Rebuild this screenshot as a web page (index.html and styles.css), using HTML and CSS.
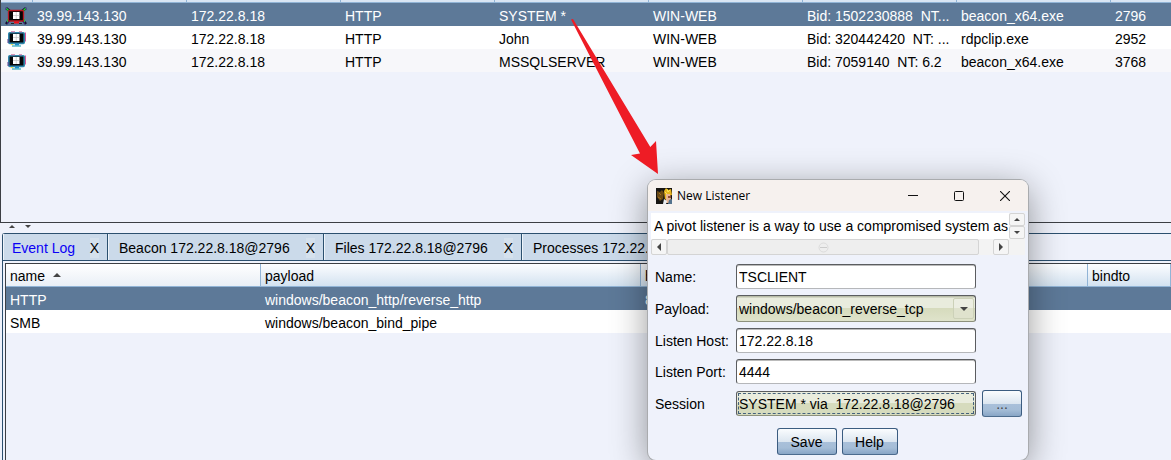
FILE: index.html
```html
<!DOCTYPE html>
<html lang="en">
<head>
<meta charset="utf-8">
<title>New Listener</title>
<link rel="stylesheet" href="styles.css">
</head>
<body>
<svg width="0" height="0" class="defs" aria-hidden="true">
  <symbol id="screen" viewBox="0 0 20 16">
    <rect x="1.800" y="1.800" width="15.400" height="10.600" rx="1" fill="#050608" stroke="#2f86ac" stroke-width="1.600"/>
    <path d="M18.500 1.500v9" stroke="#d8569a" stroke-width="1"/>
    <path d="M1 8v4" stroke="#5b3b8c" stroke-width="1"/>
    <path d="M4 .8h4M12 .8h3" stroke="#c76a9c"/>
    <path d="M6 3h6.500v7H6z" fill="#fff"/>
    <path d="M9.250 3v7M6 6.500h6.500" stroke="#b9b9b9" stroke-width=".6"/>
    <path d="M8 12.800h4v1.700H8z" fill="#1c8fd0"/>
    <path d="M5 15h9" stroke="#2aa6b8" stroke-width="1.200"/>
    <path d="M4 13.500h2" stroke="#e7e34b"/>
  </symbol>
  <symbol id="screen-admin" viewBox="0 0 22 18">
    <path d="M1 1l5 4M21 1l-5 4M1 17l4-5M21 17l-4-5" stroke="#17102f" stroke-width="2.600"/>
    <path d="M1 1l4 4M21 1l-4 4" stroke="#19d62b" stroke-width="1.500"/>
    <path d="M0 3V1h2M22 3V1h-2M3 13v4M19 13v4" stroke="#52429a" fill="none"/>
    <path d="M2.500 12v3M19.500 12v3" stroke="#27c53c"/>
    <rect x="3.500" y="3.500" width="15" height="10.500" rx="1" fill="#050505" stroke="#b51722" stroke-width="1.300"/>
    <path d="M8 5h6.500v7H8z" fill="#fff"/>
    <path d="M11.250 5v7M8 8.500h6.500" stroke="#b9b9b9" stroke-width=".6"/>
    <path d="M9 14.500h5v2H9z" fill="#f01018"/>
    <path d="M6 16.500h3M14 16.500h3" stroke="#222"/>
  </symbol>
</svg>

<main class="app">
  <section class="sessions">
    <div class="head-strip"><i></i><i></i><i></i><i></i><i></i><i></i><i></i><i></i></div>
    <table class="grid sessions-grid">
      <colgroup><col class="c-icon"><col class="c-data"><col class="c-data"><col class="c-data"><col class="c-data"><col class="c-data"><col class="c-data"><col class="c-data"><col></colgroup>
      <tbody>
        <tr class="selected"><td class="icon"><svg width="22" height="18"><use href="#screen-admin"/></svg></td><td>39.99.143.130</td><td>172.22.8.18</td><td>HTTP</td><td>SYSTEM *</td><td>WIN-WEB</td><td>Bid: 1502230888  NT...</td><td>beacon_x64.exe</td><td>2796</td></tr>
        <tr><td class="icon"><svg width="20" height="16"><use href="#screen"/></svg></td><td>39.99.143.130</td><td>172.22.8.18</td><td>HTTP</td><td>John</td><td>WIN-WEB</td><td>Bid: 320442420  NT: ...</td><td>rdpclip.exe</td><td>2952</td></tr>
        <tr class="alt"><td class="icon"><svg width="20" height="16"><use href="#screen"/></svg></td><td>39.99.143.130</td><td>172.22.8.18</td><td>HTTP</td><td>MSSQLSERVER</td><td>WIN-WEB</td><td>Bid: 7059140  NT: 6.2</td><td>beacon_x64.exe</td><td>3768</td></tr>
      </tbody>
    </table>
  </section>

  <div class="divider">
    <svg width="6" height="3"><path d="M0 3L3 0l3 3z" fill="#444"/></svg>
    <svg width="6" height="3"><path d="M0 0l3 3 3-3z" fill="#444"/></svg>
  </div>

  <section class="panel">
    <nav class="tabs">
      <div class="tab t1"><a href="#log" class="active">Event Log</a><button>X</button></div>
      <div class="tab t2"><a href="#beacon">Beacon 172.22.8.18@2796</a><button>X</button></div>
      <div class="tab t3"><a href="#files">Files 172.22.8.18@2796</a><button>X</button></div>
      <div class="tab t4"><a href="#processes">Processes 172.22.8.18@2796</a><button>X</button></div>
    </nav>
    <div class="tab-body">
      <table class="grid listeners">
        <colgroup><col class="c-name"><col class="c-payload"><col class="c-host"><col></colgroup>
        <thead><tr><th>name<svg class="sort" width="8" height="4"><path d="M0 4l4-4 4 4z" fill="#444"/></svg></th><th>payload</th><th>host</th><th>bindto</th></tr></thead>
        <tbody>
          <tr class="selected"><td>HTTP</td><td>windows/beacon_http/reverse_http</td><td>8</td><td></td></tr>
          <tr><td>SMB</td><td>windows/beacon_bind_pipe</td><td></td><td></td></tr>
        </tbody>
      </table>
    </div>
  </section>
</main>

<form class="dialog">
  <header class="titlebar">
    <svg class="logo" width="16" height="16" viewBox="0 0 16 16">
      <rect width="16" height="16" fill="#171512"/>
      <path d="M1 3l3 1 2-2 2 3-1 6-3 2-3-4z" fill="#6b4a14"/>
      <path d="M3 5l2 2M2 9l3 2" stroke="#a8741c"/>
      <path d="M8 3l2-3 2 2 3-1 1 6-4 1-3 4z" fill="#e9b41e"/>
      <path d="M11 1l1 3 2-2M9 4l2 2" stroke="#fbea51" fill="none"/>
      <path d="M10 6h4l1 5-2 4h-3z" fill="#e9b591"/>
      <path d="M12 8h3v2h-3z" fill="#8c4b35"/>
      <path d="M8 11l3 2-1 3H7z" fill="#e8edf1"/>
      <path d="M13 12l3-1v5h-4z" fill="#54738e"/>
    </svg>
    <h1>New Listener</h1>
    <button type="button" aria-label="Minimize"><svg width="10" height="10"><path d="M0 4.500h10" stroke="#111"/></svg></button>
    <button type="button" aria-label="Maximize"><svg width="10" height="10"><rect x=".5" y=".5" width="9" height="9" rx="1" fill="none" stroke="#111"/></svg></button>
    <button type="button" aria-label="Close"><svg width="10" height="10"><path d="M0 0l10 10M10 0L0 10" stroke="#111" stroke-width="1.100"/></svg></button>
  </header>

  <div class="scroller">
    <p>A pivot listener is a way to use a compromised system as</p>
    <div class="vbar">
      <button type="button" aria-label="Up"><svg width="6" height="3"><path d="M0 3l3-3 3 3z" fill="#444"/></svg></button>
      <button type="button" aria-label="Down"><svg width="6" height="3"><path d="M0 0l3 3 3-3z" fill="#444"/></svg></button>
    </div>
    <div class="hbar">
      <button type="button" aria-label="Left"><svg width="4" height="8"><path d="M4 0L0 4l4 4z" fill="#444"/></svg></button>
      <div class="thumb"><svg width="11" height="11"><circle cx="5.500" cy="5.500" r="4.500" fill="none" stroke="#dcdcdc"/><path d="M2 5.500h7" stroke="#ccc"/></svg></div>
      <button type="button" aria-label="Right"><svg width="4" height="8"><path d="M0 0l4 4-4 4z" fill="#444"/></svg></button>
    </div>
  </div>

  <div class="fields">
    <label for="name">Name:</label><input id="name" value="TSCLIENT">
    <label for="payload">Payload:</label>
    <div class="combo"><select id="payload"><option>windows/beacon_reverse_tcp</option></select><span class="drop"><svg width="8" height="4"><path d="M0 0l4 4 4-4z" fill="#444"/></svg></span></div>
    <label for="host">Listen Host:</label><input id="host" value="172.22.8.18">
    <label for="port">Listen Port:</label><input id="port" value="4444">
    <label for="session">Session</label><button type="button" id="session" class="session"><span>SYSTEM * via  172.22.8.18@2796</span></button>
    <button type="button" class="btn more">...</button>
  </div>
  <div class="actions"><button type="button" class="btn save">Save</button><button type="button" class="btn help">Help</button></div>
</form>

<svg class="arrow" width="100" height="170" viewBox="565 10 100 170" aria-hidden="true"><path d="M571 19.500L573 19l77.300 128L656 141l2 33-27-19 9-1.500z" fill="#ee1c25"/></svg>
</body>
</html>
```

FILE: styles.css
```css
* { box-sizing: border-box; }
body {
  margin: 0;
  min-height: 100vh;
  position: relative;
  overflow: hidden;
  background: #eff2fb;
  color: #000;
  font: 14px/20px "Liberation Sans", Arial, sans-serif;
}
.defs { position: absolute; }
svg { display: block; flex: none; }
button, input, select { font: inherit; color: inherit; margin: 0; padding: 0; }
button { border: 0; background: none; }

.app { display: grid; grid-template-rows: 223px 10px 1fr; min-height: 100vh; }

.sessions { border-left: 1px solid #3c3f44; border-bottom: 1px solid #3c3f44; overflow: hidden; }
.head-strip {
  display: grid;
  grid-template-columns: 32px repeat(7, 154px) 1fr;
  height: 3px;
  background: #d9e5f3;
  border-bottom: 1px solid #91b4d6;
}
.head-strip i { border-right: 1px solid #91b4d6; }

.grid { width: 100%; table-layout: fixed; border-collapse: separate; border-spacing: 0; }
.grid td { height: 23px; padding: 3px 4px 0; background: #fff; white-space: pre; overflow: hidden; line-height: 20px; }
.grid .alt td { background: #f7f7fa; }
.grid .selected td { background: #5d7998; color: #fff; }
.grid .icon { padding: 2px 0 0 6px; }
.grid .selected .icon { padding-left: 4px; }
.c-icon { width: 32px; }
.c-data { width: 154px; }

.divider { display: flex; gap: 10px; padding: 2px 9px; }

.panel { margin-left: 2px; border-left: 1px solid #2c506f; border-top: 1px solid #2c506f; border-top-left-radius: 3px; display: flex; flex-direction: column; }
.tabs { display: flex; height: 27px; border-bottom: 1px solid #2c506f; }
.tab {
  display: flex;
  justify-content: space-between;
  align-items: center;
  padding: 1px 8px 0 10px;
  border-right: 1px solid #2c506f;
  border-left: 1px solid #eef4fa;
  background: #cbdaea;
  white-space: nowrap;
}
.tab a { color: #000; text-decoration: none; }
.tab .active { color: #0a00f5; }
.tab button { background: #d5e1ed; }
.t1 { width: 105px; padding-left: 8px; }
.t2 { width: 216px; }
.t3 { width: 198px; }
.t4 { width: 236px; }
.tab-body { flex: 1; margin: 2px 0 0 2px; border-left: 1px solid #3c3f44; border-top: 1px solid #3c3f44; }

.listeners th {
  height: 23px;
  padding: 2px 4px 0;
  text-align: left;
  font-weight: normal;
  line-height: 20px;
  background: linear-gradient(#fcfdff, #d3e2f0);
  border-right: 1px solid #91b4d6;
  border-bottom: 1px solid #91b4d6;
}
.listeners th:first-child { background: linear-gradient(#fff, #e9eff6); }
.sort { display: inline-block; margin-left: 8px; vertical-align: 4px; }
.c-name { width: 255px; }
.c-payload { width: 380px; }
.c-host { width: 447px; }

.dialog {
  position: absolute;
  left: 648px;
  top: 180px;
  width: 380px;
  padding-bottom: 5px;
  background: #eff2fb;
  border-radius: 8px;
  box-shadow: 0 0 0 1px #a9abae, 0 8px 36px rgba(0, 0, 0, .42);
}
.titlebar { display: flex; align-items: center; height: 31px; padding-left: 8px; background: #f6f1ee; border-radius: 8px 8px 0 0; }
.titlebar h1 { flex: 1; margin: 0 0 0 5px; font: 12px/20px "Open Sans", "Noto Sans", sans-serif; }
.titlebar button { width: 46px; height: 28px; display: grid; place-items: center; }

.scroller { display: grid; grid-template: 26px 16px / 1fr 16px; margin: 2px 3px 0; background: #f3f3f3; }
.scroller p { margin: 0; padding: 3px 0 0 3px; background: #fff; white-space: nowrap; overflow: hidden; }
.vbar { display: grid; grid-template-rows: 1fr 1fr; }
.scroller button, .thumb { display: grid; place-items: center; border: 1px solid #d4d4d4; border-radius: 2px; background: #f5f5f5; }
.hbar { display: grid; grid-template-columns: 16px 312px 1fr; }
.hbar button:last-child { justify-self: end; width: 16px; }
.thumb { background: #eee; }

.fields { display: grid; grid-template-columns: 75px 240px 40px; column-gap: 6px; row-gap: 6px; align-items: center; margin: 9px 0 0 7px; }
.fields label { grid-column: 1; white-space: nowrap; }
.fields input, .combo, .session { grid-column: 2; width: 240px; border: 1px solid #5b5d60; border-bottom-color: #b5b7ba; border-radius: 3px; }
.fields input { height: 25px; padding: 0 2px; background: #fff; box-shadow: inset 0 1px 0 #bbb; }
.combo { display: grid; height: 27px; background: linear-gradient(#b9bda8 1px, #e9ecdd 2px, #e9ecdd 50%, #d6dbbd 50%, #dfe3cb); border-bottom-color: #8d917c; }
.combo select { grid-area: 1 / 1; appearance: none; border: 0; background: transparent; padding: 0 2px; height: 25px; outline: 0; }
.drop { grid-area: 1 / 1; justify-self: end; align-self: center; width: 21px; height: 21px; margin-right: 1px; display: grid; place-items: center; border: 1px solid #ccd1b8; border-radius: 2px; background: linear-gradient(#eceee2 50%, #dfe2cd 50%); pointer-events: none; }
.session { height: 25px; padding: 1px; text-align: left; white-space: pre; background: linear-gradient(#e9ecdd 50%, #d6dbbd 50%); border-bottom-color: #8d917c; }
.session span { display: block; height: 21px; border: 1px dashed #44617c; line-height: 21px; }
.btn { height: 27px; border: 1px solid #3b5c80; border-bottom-color: #4d6c8e; border-radius: 3px; background: linear-gradient(#fafcfe, #dce6f0 50%, #a9c0da 50%, #a5bdd7 75%, #89a6c6); }
.more { color: #444; }
.actions { display: flex; justify-content: center; gap: 5px; margin: 11px 2px 0 0; }
.save { width: 60px; }
.help { width: 56px; }

.arrow { position: absolute; left: 565px; top: 10px; }
```
